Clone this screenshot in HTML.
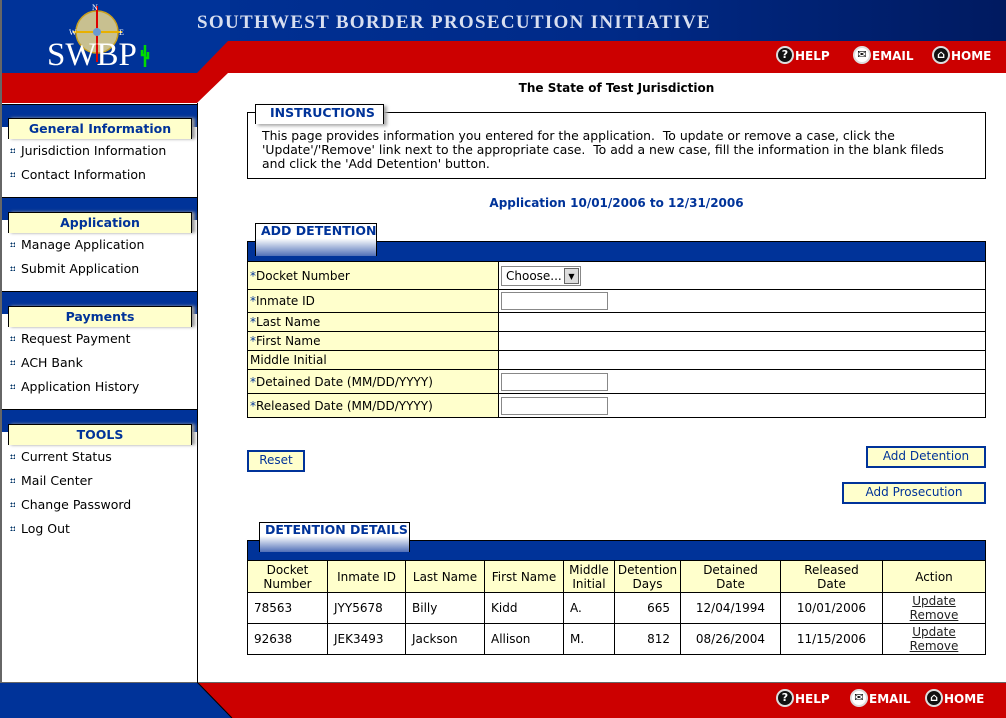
<!DOCTYPE html>
<html><head><meta charset="utf-8"><style>
*{margin:0;padding:0;box-sizing:border-box}
body{width:1006px;height:718px;position:relative;overflow:hidden;background:#fff;font-family:"DejaVu Sans","Liberation Sans",sans-serif;font-size:12px;color:#000}
.a{position:absolute}
.blue{color:#003399}
.hd{position:absolute;left:8px;width:184px;height:21px;background:#ffffcc;border:1px solid #000;border-bottom:none;box-shadow:3px 0 3px #999;text-align:center;font-weight:bold;font-size:12.5px;color:#003399;line-height:20px}
.bar{position:absolute;left:2px;width:195px;height:23px;background:#003399;border-top:1px solid #000}
.it{position:absolute;left:10px;font-size:12.5px;white-space:nowrap}
.it:before{content:"";display:inline-block;width:5px;height:5px;margin-right:6px;vertical-align:2px;background:
radial-gradient(circle,#036 0.9px,transparent 1px) 0 0/3px 3px}
.tab{position:absolute;background:linear-gradient(#fff 45%,#5070b8);border:1px solid #000;border-bottom:none;font-weight:bold;color:#003399;font-size:12.5px;padding-left:5px;line-height:14px;white-space:nowrap}
table{border-collapse:collapse;position:absolute}
td{border:1px solid #000;padding:0 2px}
.f td:first-child{background:#ffffcc}
.f .s{color:#003399}
.inp{display:inline-block;width:107px;height:18px;border:1px solid #888;background:#fff;vertical-align:middle}
.btn{position:absolute;background:#ffffcc;border:2px solid #003399;color:#003399;text-align:center;font-size:12px;line-height:17px}
.d td{text-align:left;padding-left:6px}
.d tr.h td{background:#ffffcc;text-align:center;padding:0;line-height:14px}
.icn{display:inline-block;width:18px;height:18px;border-radius:50%;background:#111;border:2px solid #ddd;vertical-align:middle;color:#fff;font-size:11px;text-align:center;line-height:14px;margin-right:1px;position:relative;top:-2px}
.nav{position:absolute;color:#fff;font-weight:bold;font-size:12px;white-space:nowrap;line-height:18px}
</style></head><body>
<svg class="a" style="left:0;top:0" width="1006" height="718">
<defs><linearGradient id="g" x1="0" x2="1"><stop offset="0" stop-color="#003399"/><stop offset="0.6" stop-color="#002a88"/><stop offset="1" stop-color="#001a60"/></linearGradient></defs>
<rect x="0" y="0" width="1006" height="73" fill="url(#g)"/>
<rect x="0" y="0" width="230" height="73" fill="#003399"/>
<polygon points="228,41 1006,41 1006,73 228,73 197,103 0,103 0,73 197,73" fill="#cc0000"/>
<rect x="0" y="103" width="197" height="580" fill="#fff"/>
<rect x="0" y="0" width="2" height="718" fill="#666"/>
<rect x="0" y="682" width="1006" height="36" fill="#cc0000"/>
<polygon points="0,682 197,682 232,718 0,718" fill="#003399"/>
<line x1="197" y1="682" x2="232" y2="718" stroke="#000"/>
<rect x="0" y="682" width="1006" height="1" fill="#666"/>
<rect x="197" y="103" width="1" height="580" fill="#000"/>
<circle cx="97" cy="32" r="21" fill="#c8c090" stroke="#c9a020" stroke-width="1.5"/>
<line x1="97" y1="6" x2="97" y2="62" stroke="#d00" stroke-width="2"/>
<line x1="73" y1="32" x2="122" y2="32" stroke="#e8b000" stroke-width="2"/>
<circle cx="97" cy="32" r="4" fill="#6a9ad0"/>
<text x="92" y="10" fill="#fff" font-size="8" font-family="Liberation Serif">N</text>
<text x="69" y="35" fill="#fff" font-size="8" font-family="Liberation Serif">W</text>
<text x="119" y="35" fill="#fff" font-size="8" font-family="Liberation Serif">E</text>
<text x="47" y="65" fill="#fff" font-size="33" font-family="Liberation Serif">SWBP</text>
<path d="M145 67V45M145 55h-3v-5M145 58h3v-6" stroke="#00dd00" stroke-width="2.5" fill="none"/>
<text x="197" y="28" fill="#d8dff0" font-size="19" font-family="Liberation Serif" font-weight="bold" letter-spacing="1.3">SOUTHWEST BORDER PROSECUTION INITIATIVE</text>
</svg>
<div class="nav" style="left:776px;top:47px"><span class="icn">?</span>HELP</div>
<div class="nav" style="left:853px;top:47px"><span class="icn" style="background:#fff;color:#000">✉</span>EMAIL</div>
<div class="nav" style="left:932px;top:47px"><span class="icn">⌂</span>HOME</div>
<div class="nav" style="left:776px;top:690px"><span class="icn">?</span>HELP</div>
<div class="nav" style="left:850px;top:690px"><span class="icn" style="background:#fff;color:#000">✉</span>EMAIL</div>
<div class="nav" style="left:925px;top:690px"><span class="icn">⌂</span>HOME</div>

<div class="bar" style="top:104px"></div><div class="hd" style="top:118px">General Information</div>
<div class="it" style="top:143px">Jurisdiction Information</div>
<div class="it" style="top:167px">Contact Information</div>
<div class="bar" style="top:197px"></div><div class="hd" style="top:212px">Application</div>
<div class="it" style="top:237px">Manage Application</div>
<div class="it" style="top:261px">Submit Application</div>
<div class="bar" style="top:291px"></div><div class="hd" style="top:306px">Payments</div>
<div class="it" style="top:331px">Request Payment</div>
<div class="it" style="top:355px">ACH Bank</div>
<div class="it" style="top:379px">Application History</div>
<div class="bar" style="top:409px"></div><div class="hd" style="top:424px">TOOLS</div>
<div class="it" style="top:449px">Current Status</div>
<div class="it" style="top:473px">Mail Center</div>
<div class="it" style="top:497px">Change Password</div>
<div class="it" style="top:521px">Log Out</div>

<div class="a" style="left:247px;width:739px;top:81px;text-align:center;font-weight:bold">The State of Test Jurisdiction</div>
<div class="a" style="left:247px;top:112px;width:739px;height:67px;border:1px solid #000;padding:16px 24px 0 14px;line-height:14px;font-size:12.4px">This page provides information you entered for the application. &nbsp;To update or remove a case, click the 'Update'/'Remove' link next to the appropriate case. &nbsp;To add a new case, fill the information in the blank fileds and click the 'Add Detention' button.</div>
<div class="a" style="left:255px;top:104px;width:129px;height:20px;background:#fff;border:1px solid #000;border-bottom:none;box-shadow:3px 2px 3px #aaa;color:#003399;font-weight:bold;font-size:12.5px;padding-left:14px">INSTRUCTIONS</div>
<div class="a blue" style="left:247px;width:739px;top:196px;text-align:center;font-weight:bold">Application 10/01/2006 to 12/31/2006</div>

<div class="a" style="left:247px;top:241px;width:739px;height:21px;background:#003399;border:1px solid #000"></div>
<div class="tab" style="left:255px;top:223px;width:122px;height:33px">ADD DETENTION</div>
<table class="f" style="left:247px;top:261px;width:739px">
<col style="width:251px"><col>
<tr style="height:28px"><td><span class="s">*</span>Docket Number</td><td><span style="display:inline-block;width:80px;height:20px;border:1px solid #888;padding-left:4px;line-height:18px;position:relative">Choose...<span style="position:absolute;right:1px;top:1px;width:15px;height:16px;background:#ddd;border:1px solid #666;font-size:8px;text-align:center;line-height:15px">▼</span></span></td></tr>
<tr style="height:23px"><td><span class="s">*</span>Inmate ID</td><td><span class="inp"></span></td></tr>
<tr style="height:19px"><td><span class="s">*</span>Last Name</td><td></td></tr>
<tr style="height:19px"><td><span class="s">*</span>First Name</td><td></td></tr>
<tr style="height:19px"><td>Middle Initial</td><td></td></tr>
<tr style="height:24px"><td><span class="s">*</span>Detained Date (MM/DD/YYYY)</td><td><span class="inp"></span></td></tr>
<tr style="height:24px"><td><span class="s">*</span>Released Date (MM/DD/YYYY)</td><td><span class="inp"></span></td></tr>
</table>

<div class="btn" style="left:247px;top:450px;width:58px;height:22px">Reset</div>
<div class="btn" style="left:866px;top:446px;width:120px;height:22px">Add Detention</div>
<div class="btn" style="left:842px;top:482px;width:144px;height:22px">Add Prosecution</div>

<div class="a" style="left:247px;top:540px;width:739px;height:21px;background:#003399;border:1px solid #000"></div>
<div class="tab" style="left:259px;top:522px;width:151px;height:30px">DETENTION DETAILS</div>
<table class="d" style="left:247px;top:560px;width:739px">
<col style="width:80px"><col style="width:78px"><col style="width:79px"><col style="width:79px"><col style="width:51px"><col style="width:66px"><col style="width:100px"><col style="width:102px"><col>
<tr class="h" style="height:32px"><td>Docket<br>Number</td><td>Inmate ID</td><td>Last Name</td><td>First Name</td><td>Middle<br>Initial</td><td>Detention<br>Days</td><td>Detained<br>Date</td><td>Released<br>Date</td><td>Action</td></tr>
<tr style="height:31px"><td>78563</td><td>JYY5678</td><td>Billy</td><td>Kidd</td><td>A.</td><td style="text-align:right;padding-right:10px">665</td><td style="text-align:center;padding:0">12/04/1994</td><td style="text-align:center;padding:0">10/01/2006</td><td style="text-align:center;padding:0;line-height:14px;text-decoration:underline;color:#222">Update<br>Remove</td></tr>
<tr style="height:31px"><td>92638</td><td>JEK3493</td><td>Jackson</td><td>Allison</td><td>M.</td><td style="text-align:right;padding-right:10px">812</td><td style="text-align:center;padding:0">08/26/2004</td><td style="text-align:center;padding:0">11/15/2006</td><td style="text-align:center;padding:0;line-height:14px;text-decoration:underline;color:#222">Update<br>Remove</td></tr>
</table>
</body></html>
